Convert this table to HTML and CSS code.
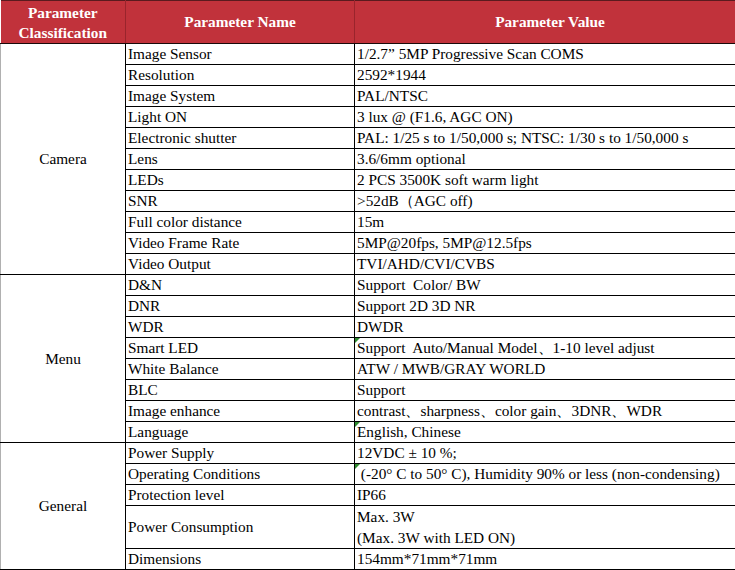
FILE: index.html
```html
<!DOCTYPE html>
<html>
<head>
<meta charset="utf-8">
<link rel="stylesheet" href="styles.css">
</head>
<body>
<table class="spec">
  <colgroup>
    <col class="c1"><col class="c2"><col class="c3">
  </colgroup>
  <thead>
    <tr>
      <th>Parameter<br>Classification</th>
      <th>Parameter Name</th>
      <th>Parameter Value</th>
    </tr>
  </thead>
  <tbody>
    <tr><td class="cls" rowspan="11">Camera<span class="mark-left"></span></td><td>Image Sensor</td><td>1/2.7” 5MP Progressive Scan COMS</td></tr>
    <tr><td>Resolution</td><td>2592*1944</td></tr>
    <tr><td>Image System</td><td>PAL/NTSC</td></tr>
    <tr><td>Light ON</td><td>3 lux @ (F1.6, AGC ON)</td></tr>
    <tr><td>Electronic shutter</td><td>PAL: 1/25 s to 1/50,000 s; NTSC: 1/30 s to 1/50,000 s</td></tr>
    <tr><td>Lens</td><td>3.6/6mm optional</td></tr>
    <tr><td>LEDs</td><td>2 PCS 3500K soft warm light</td></tr>
    <tr><td>SNR</td><td>&gt;52dB（AGC off)</td></tr>
    <tr><td>Full color distance</td><td>15m</td></tr>
    <tr><td>Video Frame Rate</td><td>5MP@20fps, 5MP@12.5fps</td></tr>
    <tr><td>Video Output</td><td>TVI/AHD/CVI/CVBS</td></tr>
    <tr><td class="cls" rowspan="8">Menu</td><td>D&amp;N</td><td>Support&nbsp; Color/ BW</td></tr>
    <tr><td>DNR</td><td>Support 2D 3D NR</td></tr>
    <tr><td>WDR</td><td>DWDR</td></tr>
    <tr><td>Smart LED</td><td class="note">Support&nbsp; Auto/Manual Model、1-10 level adjust</td></tr>
    <tr><td>White Balance</td><td>ATW / MWB/GRAY WORLD</td></tr>
    <tr><td>BLC</td><td>Support</td></tr>
    <tr><td>Image enhance</td><td>contrast、sharpness、color gain、3DNR、WDR</td></tr>
    <tr><td>Language</td><td class="note">English, Chinese</td></tr>
    <tr><td class="cls last" rowspan="5">General</td><td>Power Supply</td><td>12VDC ± 10 %;</td></tr>
    <tr><td>Operating Conditions</td><td class="note">&nbsp;(-20° C to 50° C), Humidity 90% or less (non-condensing)</td></tr>
    <tr><td>Protection level</td><td>IP66</td></tr>
    <tr><td>Power Consumption</td><td class="two">Max. 3W<br>(Max. 3W with LED ON)</td></tr>
    <tr class="bottom"><td>Dimensions</td><td>154mm*71mm*71mm</td></tr>
  </tbody>
</table>
</body>
</html>
```

FILE: styles.css
```css
html, body {
  margin: 0;
  padding: 0;
  background: #ffffff;
  font-family: "Liberation Serif", serif;
}

.spec {
  border-collapse: collapse;
  table-layout: fixed;
  width: 745px;
  font-size: 15.3px;
  color: #000;
}

.spec th,
.spec td {
  font-family: "Liberation Serif", "DejaVu Serif", serif;
}

.c1 { width: 125px; }
.c2 { width: 229px; }
.c3 { width: 391px; }

.spec thead th {
  background: #c1323b;
  color: #ffffff;
  font-weight: bold;
  font-size: 15.3px;
  line-height: 20px;
  height: 41px;
  padding: 0;
  text-align: center;
  vertical-align: middle;
  border-top: 1px solid #5a1a1e;
  border-bottom: 1px solid #1a0a0a;
  border-left: 1px solid #9a242c;
  border-right: 1px solid #9a242c;
}

.spec thead th:first-child {
  border-left: none;
  padding-top: 1px;
}

.spec td {
  border: 1px solid #000;
  height: 20px;
  line-height: 20px;
  padding: 0 0 0 2px;
  white-space: nowrap;
  overflow: hidden;
  vertical-align: middle;
}

.spec td.cls {
  text-align: center;
  padding: 0;
  border-left: 1px solid #b0b0b0;
  position: relative;
}

.spec tr td:last-child {
  border-right: none;
}

.spec td.two {
  height: 41px;
  line-height: 21px;
}

.spec tr.bottom td,
.spec td.cls.last {
  border-bottom: 2px solid #000;
}

.note {
  position: relative;
}

.note::before {
  content: "";
  position: absolute;
  left: 0;
  top: 0;
  width: 0;
  height: 0;
  border-top: 5px solid #2e8b2e;
  border-right: 5px solid transparent;
}

.mark-left {
  position: absolute;
  left: -1px;
  top: 125px;
  width: 1px;
  height: 22px;
  background: #3aa33a;
}
```
